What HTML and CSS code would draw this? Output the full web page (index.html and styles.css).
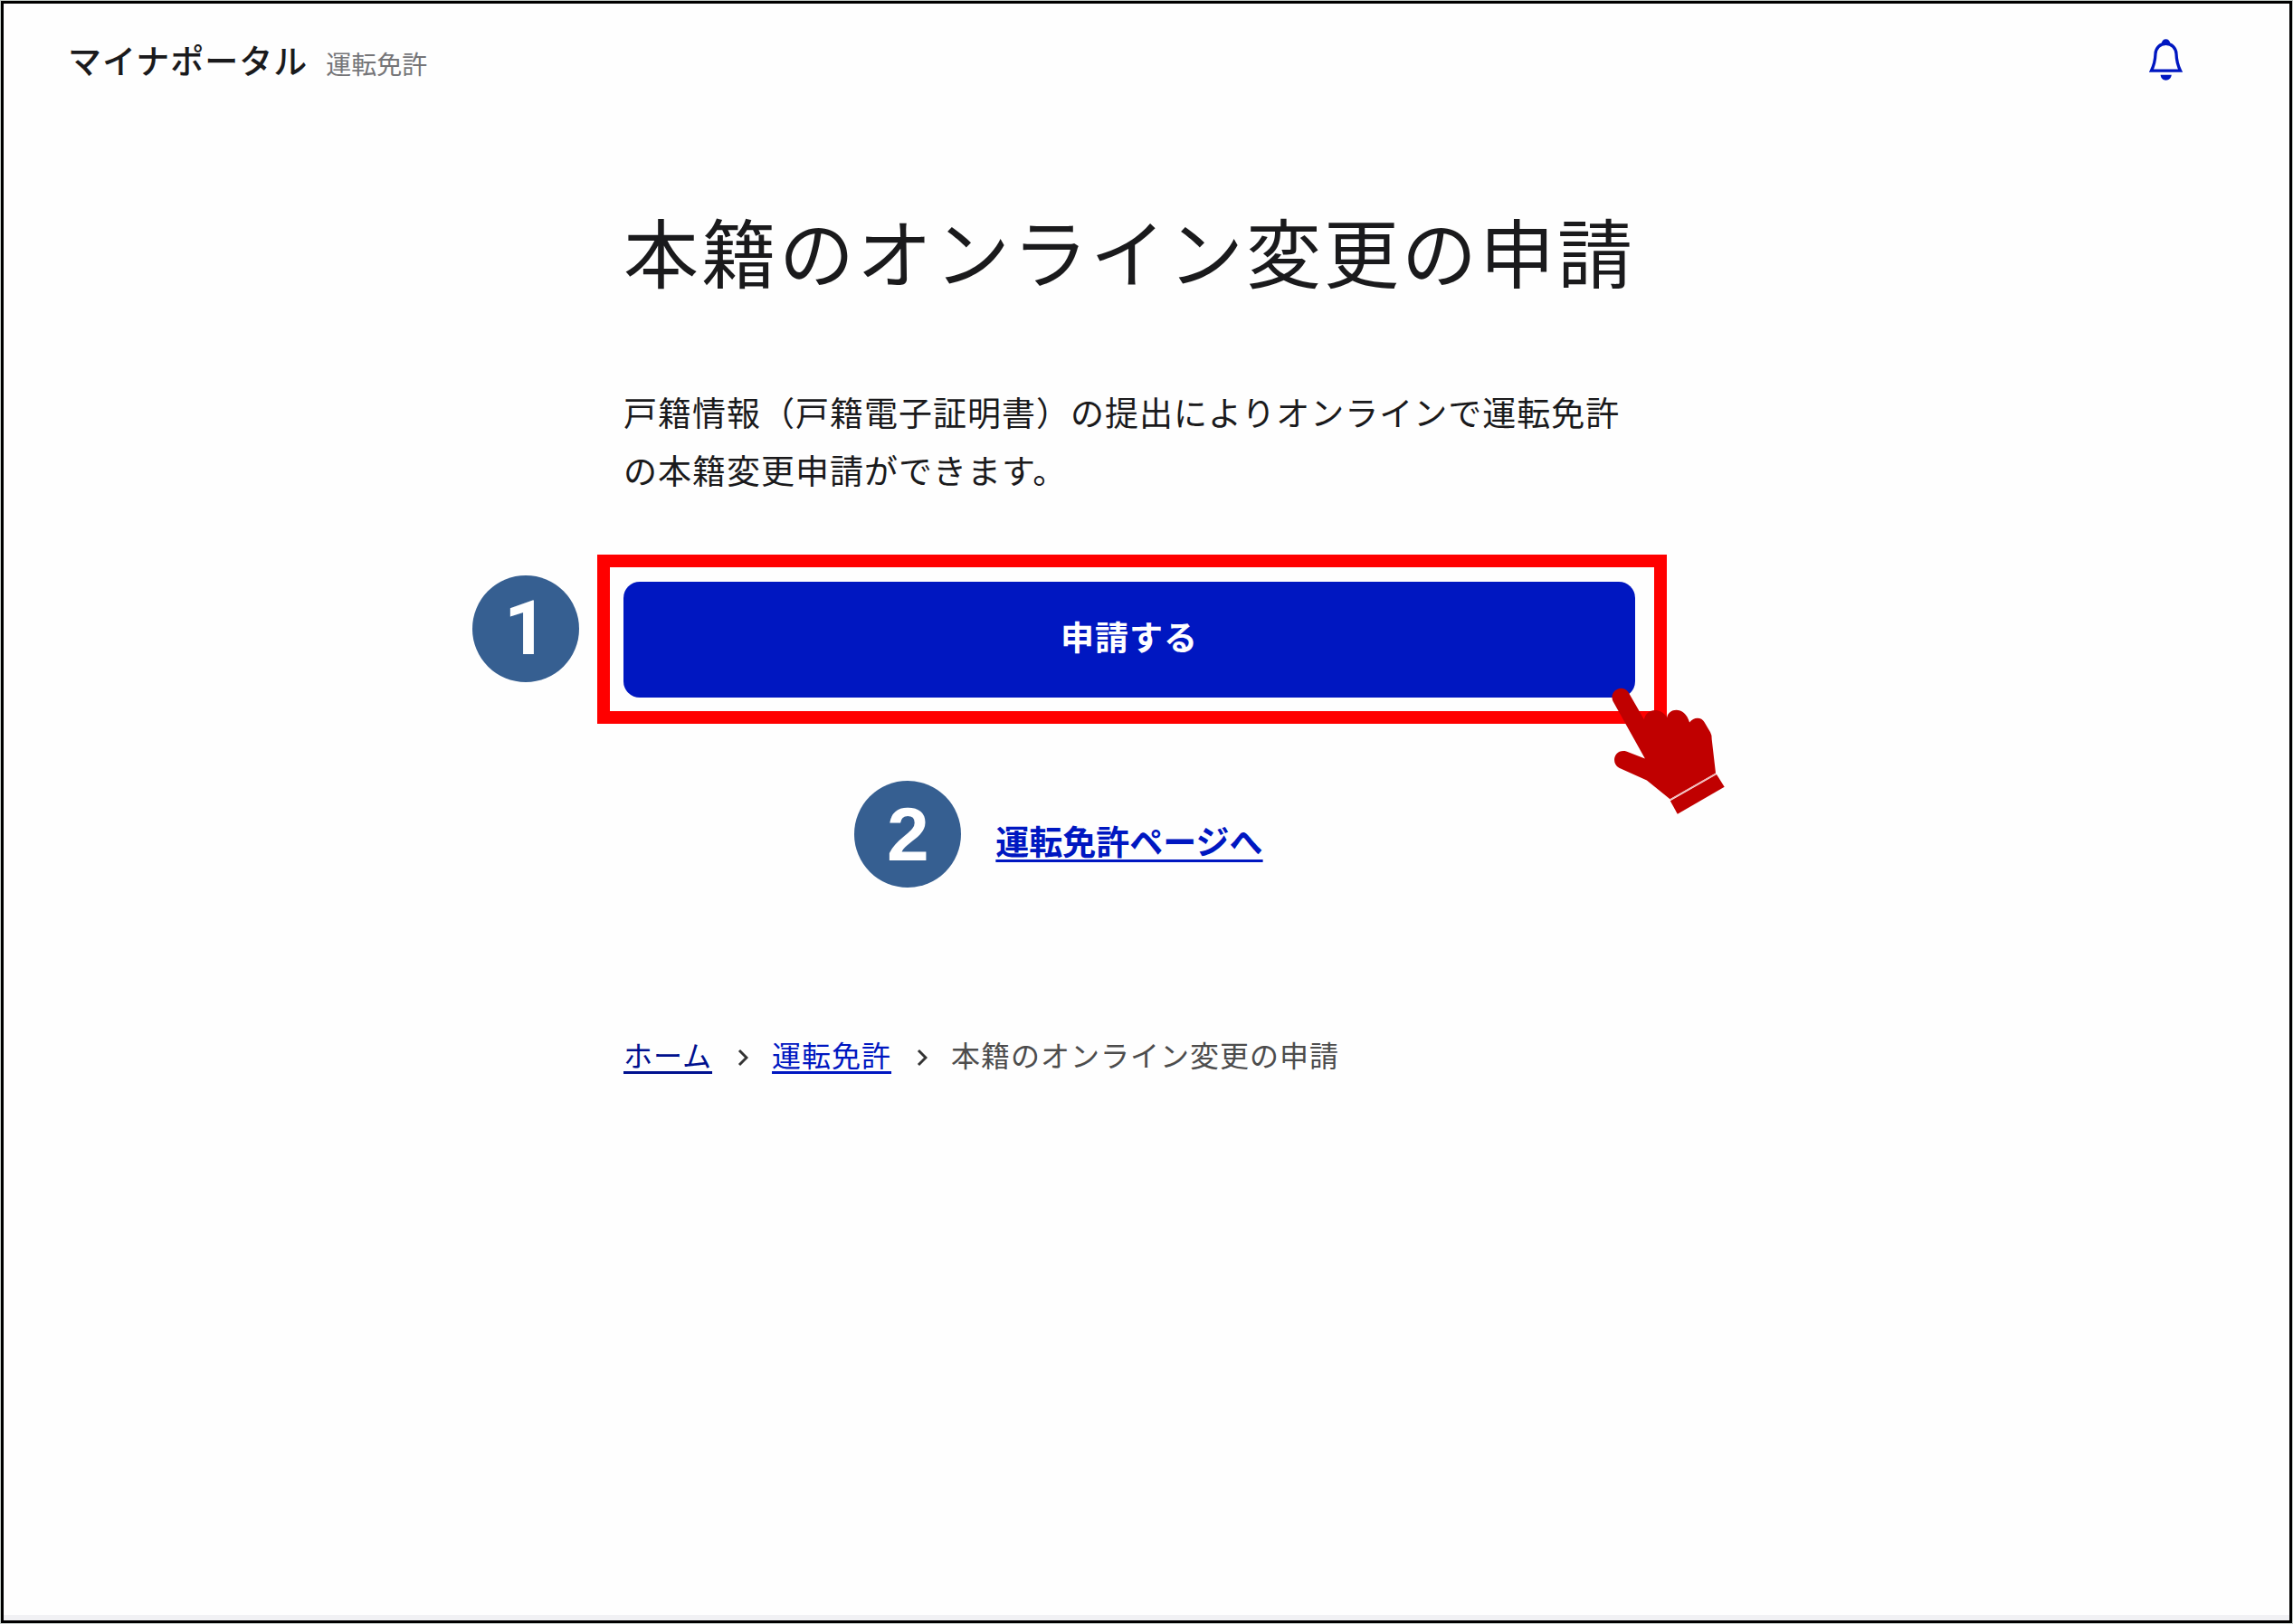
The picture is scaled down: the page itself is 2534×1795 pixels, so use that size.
FILE: index.html
```html
<!DOCTYPE html>
<html lang="ja">
<head>
<meta charset="utf-8">
<meta name="viewport" content="width=device-width, initial-scale=1">
<title>本籍のオンライン変更の申請</title>
<link rel="stylesheet" href="styles.css">
</head>
<body>
<div class="app">
  <header class="header">
    <div class="brand">
      <span class="brand-name">マイナポータル</span>
      <span class="brand-section">運転免許</span>
    </div>
    <button class="bell" type="button" aria-label="お知らせ">
      <svg viewBox="0 0 112 140" width="37" height="46" aria-hidden="true">
        <path d="M56 16C36 16 22 31 21 50C20 75 17 88 7 107H105C95 88 92 75 91 50C90 31 76 16 56 16Z" fill="none" stroke="currentColor" stroke-width="10"/>
        <path d="M41 16C43 6 48 1 56 1S69 6 71 16Z" fill="currentColor"/>
        <path d="M38 121H75C74 132 66 139 56 139S39 132 38 121Z" fill="currentColor"/>
      </svg>
    </button>
  </header>
  <main class="main">
    <h1 class="title">本籍のオンライン変更の申請</h1>
    <p class="lead">戸籍情報（戸籍電子証明書）の提出によりオンラインで運転免許の本籍変更申請ができます。</p>
    <div class="action">
      <button class="submit" type="button">申請する</button>
      <span class="ring"></span>
      <span class="step step-one">1</span>
      <svg class="hand" viewBox="183 478 376 421" aria-hidden="true">
        <path d="M187 522C173 490 218 462 239 494L291 584C296 548 345 540 367 577C372 545 427 538 442 594C455 574 482 575 491 592L511 626Q516 634 516 650L529 762L377 849L300 786L208 745C177 726 195 680 232 690L294 714Z"/>
        <path d="M378 855L532 767L558 808L402 898Z"/>
        <path class="cuff-line" d="M377 851L530 764"/>
      </svg>
    </div>
    <div class="back">
      <a class="back-link" href="#">運転免許ページへ</a>
      <span class="step step-two">2</span>
    </div>
    <nav aria-label="パンくずリスト">
      <ol class="crumbs">
        <li><a class="crumb-home" href="#">ホーム</a></li>
        <li class="crumb"><svg class="chevron" viewBox="0 0 12 20" aria-hidden="true"><path d="M2 2L10 10L2 18"/></svg><a href="#">運転免許</a></li>
        <li class="crumb"><svg class="chevron" viewBox="0 0 12 20" aria-hidden="true"><path d="M2 2L10 10L2 18"/></svg><span aria-current="page">本籍のオンライン変更の申請</span></li>
      </ol>
    </nav>
  </main>
  <footer class="footer"></footer>
</div>
</body>
</html>
```
FILE: styles.css
```css
* {
  box-sizing: border-box;
}

body {
  margin: 0;
  padding: 1px;
  min-height: 100vh;
  display: flex;
  background: #c4ccc8;
  color: #1a1a1c;
  font-family: "Noto Sans CJK JP", sans-serif;
}

.app {
  flex: 1;
  display: flex;
  flex-direction: column;
  border: 3px solid #000;
  background: #fefefe;
}

a {
  color: #0017c1;
  text-decoration-thickness: 3px;
  text-underline-offset: 5px;
}

.header {
  display: flex;
  align-items: center;
  justify-content: space-between;
  height: 124px;
  padding: 0 118px 0 71px;
}

.brand {
  display: flex;
  align-items: baseline;
  gap: 20px;
}

.brand-name {
  font-size: 37px;
  font-weight: 500;
  letter-spacing: 1px;
}

.brand-section {
  color: #757578;
  font-size: 28px;
}

.bell {
  display: flex;
  padding: 0;
  border: 0;
  background: none;
  color: #0017c1;
}

.main {
  flex: 1;
  width: 100%;
  padding: 80px 38px 80px 0;
}

.main > * {
  max-width: 1118px;
  margin-left: auto;
  margin-right: auto;
}

.title {
  margin-top: 0;
  margin-bottom: 79px;
  font-size: 83px;
  font-weight: 400;
  line-height: 136px;
  letter-spacing: 3px;
  white-space: nowrap;
}

.lead {
  margin-top: 0;
  margin-bottom: 92px;
  font-size: 37px;
  line-height: 64px;
  letter-spacing: 1px;
}

.action {
  position: relative;
}

.submit {
  display: block;
  width: 100%;
  height: 128px;
  padding: 0 0 8px;
  border: 0;
  border-radius: 18px;
  background: #0017c1;
  color: #fff;
  font-family: inherit;
  font-size: 37px;
  font-weight: 700;
  letter-spacing: 1px;
}

.ring {
  position: absolute;
  inset: -30px -35px -29px -29px;
  border: 14px solid #f00;
  pointer-events: none;
}

.step {
  position: absolute;
  width: 118px;
  height: 118px;
  border-radius: 50%;
  background: #365f91;
  color: #fff;
  font: bold 84px/118px "Liberation Sans", Arial, sans-serif;
  text-align: center;
}

/* Roboto's figure one has no foot */
.step-one {
  top: -7px;
  left: -167px;
  font-family: Roboto, sans-serif;
}

.step-two {
  top: -34px;
  left: -156px;
}

.hand {
  position: absolute;
  top: 117px;
  right: -99px;
  width: 125px;
  height: 140px;
  fill: #c00000;
  pointer-events: none;
}

.cuff-line {
  stroke: #f0b0b0;
  stroke-width: 4;
}

.back {
  position: relative;
  width: fit-content;
  margin-top: 126px;
  margin-bottom: 176px;
}

.back-link {
  display: block;
  font-size: 37px;
  font-weight: 700;
  line-height: 64px;
}

.crumbs {
  display: flex;
  gap: 28px;
  margin: 0;
  padding: 0;
  color: #4d4d4d;
  font-size: 32px;
  line-height: 56px;
  letter-spacing: 1px;
  list-style: none;
}

.crumb {
  display: flex;
  align-items: center;
  gap: 26px;
}

.crumb-home {
  color: #00118f;
}

.chevron {
  width: 12px;
  height: 20px;
  margin-top: 8px;
  fill: none;
  stroke: #333;
  stroke-width: 3;
}

.footer {
  height: 6px;
  background: #f1f1f4;
}
```
